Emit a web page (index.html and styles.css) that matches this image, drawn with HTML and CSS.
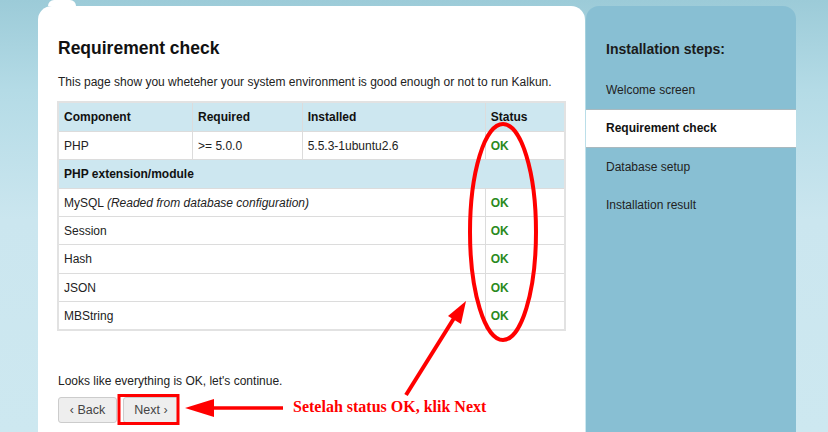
FILE: index.html
```html
<!DOCTYPE html>
<html>
<head>
<meta charset="utf-8">
<link rel="stylesheet" href="styles.css">
</head>
<body>
<div class="page">
  <div class="tabrow"><div class="tab"></div></div>
  <div class="layout">
    <main class="content">
      <h1 class="title">Requirement check</h1>
      <p class="intro">This page show you wheteher your system environment is good enough or not to run Kalkun.</p>
      <table class="req">
        <colgroup>
          <col class="c1"><col class="c2"><col class="c3"><col class="c4">
        </colgroup>
        <tr class="head tall"><th>Component</th><th>Required</th><th>Installed</th><th>Status</th></tr>
        <tr><td>PHP</td><td>&gt;= 5.0.0</td><td>5.5.3-1ubuntu2.6</td><td class="ok">OK</td></tr>
        <tr class="head tall"><th colspan="4">PHP extension/module</th></tr>
        <tr><td colspan="3">MySQL <em>(Readed from database configuration)</em></td><td class="ok">OK</td></tr>
        <tr><td colspan="3">Session</td><td class="ok">OK</td></tr>
        <tr class="tall"><td colspan="3">Hash</td><td class="ok">OK</td></tr>
        <tr><td colspan="3">JSON</td><td class="ok">OK</td></tr>
        <tr><td colspan="3">MBString</td><td class="ok">OK</td></tr>
      </table>
      <p class="done">Looks like everything is OK, let's continue.</p>
      <div class="buttons">
        <span class="btn back">&lsaquo; Back</span>
        <span class="btn next">Next &rsaquo;</span>
      </div>
    </main>
    <aside class="sidebar">
      <h2 class="side-title">Installation steps:</h2>
      <ul class="steps">
        <li>Welcome screen</li>
        <li class="active">Requirement check</li>
        <li>Database setup</li>
        <li>Installation result</li>
      </ul>
    </aside>
  </div>
  <svg class="annot" width="828" height="432" viewBox="0 0 828 432">
    <ellipse cx="503" cy="232" rx="33" ry="108" fill="none" stroke="#ff0000" stroke-width="4"/>
    <line x1="406" y1="395" x2="456" y2="315" stroke="#ff0000" stroke-width="4"/>
    <polygon points="466,301 448,316 461,324" fill="#ff0000"/>
    <line x1="283" y1="408" x2="208" y2="408" stroke="#ff0000" stroke-width="3.5"/>
    <polygon points="185,408 214,399 214,417" fill="#ff0000"/>
    <rect x="119" y="395.5" width="59" height="28" fill="none" stroke="#ff0000" stroke-width="3"/>
  </svg>
  <div class="note">Setelah status OK, klik Next</div>
</div>
</body>
</html>
```

FILE: styles.css
```css
html, body {
  margin: 0;
  padding: 0;
}
body {
  width: 828px;
  height: 432px;
  overflow: hidden;
  background: linear-gradient(to bottom, #9ccbd8 0px, #b4dbe6 90px, #cbe6ef 220px, #cde8f0 432px);
  font-family: "Liberation Sans", Arial, sans-serif;
  font-size: 12px;
  color: #222;
}
.page {
  position: relative;
  width: 828px;
  height: 432px;
}
.tabrow {
  height: 6px;
  padding-left: 48px;
}
.tab {
  width: 28px;
  height: 6px;
  background: #fff;
  border-radius: 6px 6px 0 0;
}
.layout {
  display: flex;
  padding-left: 38px;
  gap: 1px;
}
.content {
  width: 507px;
  height: 426px;
  background: #fff;
  border-radius: 14px 14px 0 0;
  padding: 0 20px 0 20px;
}
.title {
  margin: 31px 0 0 0;
  font-size: 17.5px;
  font-weight: bold;
  color: #111;
  line-height: 22px;
}
.intro {
  margin: 15px 0 0 0;
  line-height: 16px;
}
.req {
  margin-top: 11px;
  margin-left: -1px;
  width: 509px;
  border-collapse: collapse;
  border: 2px solid #e2e2e2;
}
.req .c1 { width: 135px; }
.req .c2 { width: 110px; }
.req .c3 { width: 184px; }
.req .c4 { width: 80px; }
.req th, .req td {
  border: 1px solid #dcdcdc;
  height: 27px;
  padding: 0 5px;
  text-align: left;
  vertical-align: middle;
}
.req tr.tall th, .req tr.tall td {
  height: 28px;
}
.req tr.head th {
  background: #cde7f0;
  font-weight: bold;
  color: #111;
}
.req td.ok {
  color: #2a8a1e;
  font-weight: bold;
}
.req em {
  font-style: italic;
}
.done {
  margin: 43px 0 0 0;
  line-height: 14px;
}
.buttons {
  display: flex;
  gap: 5px;
  margin-top: 9px;
}
.btn {
  display: inline-flex;
  align-items: center;
  justify-content: center;
  height: 24px;
  background: #eeeeee;
  border: 1px solid #cccccc;
  border-radius: 3px;
  color: #444;
  font-size: 12.5px;
}
.back {
  width: 57px;
}
.next {
  width: 54px;
  margin-left: 1px;
}
.sidebar {
  width: 210px;
  height: 426px;
  background: #88bfd3;
  border-radius: 13px 13px 0 0;
}
.side-title {
  margin: 34px 0 0 0;
  padding-left: 20px;
  font-size: 14px;
  font-weight: bold;
  color: #1b1b1b;
  line-height: 18px;
}
.steps {
  list-style: none;
  margin: 13px 0 0 0;
  padding: 0;
}
.steps li {
  height: 37px;
  line-height: 37px;
  padding-left: 20px;
  color: #222;
  border-top: 1px solid transparent;
}
.steps li.active {
  background: #fff;
  font-weight: bold;
  border-top: 1px solid #a9b9bf;
  border-bottom: 1px solid #a9b9bf;
  color: #111;
}
.annot {
  position: absolute;
  left: 0;
  top: 0;
  pointer-events: none;
}
.note {
  position: absolute;
  left: 293px;
  top: 397px;
  font-family: "Liberation Serif", "Times New Roman", serif;
  font-weight: bold;
  font-size: 16px;
  color: #ff0000;
  line-height: 20px;
}
```
